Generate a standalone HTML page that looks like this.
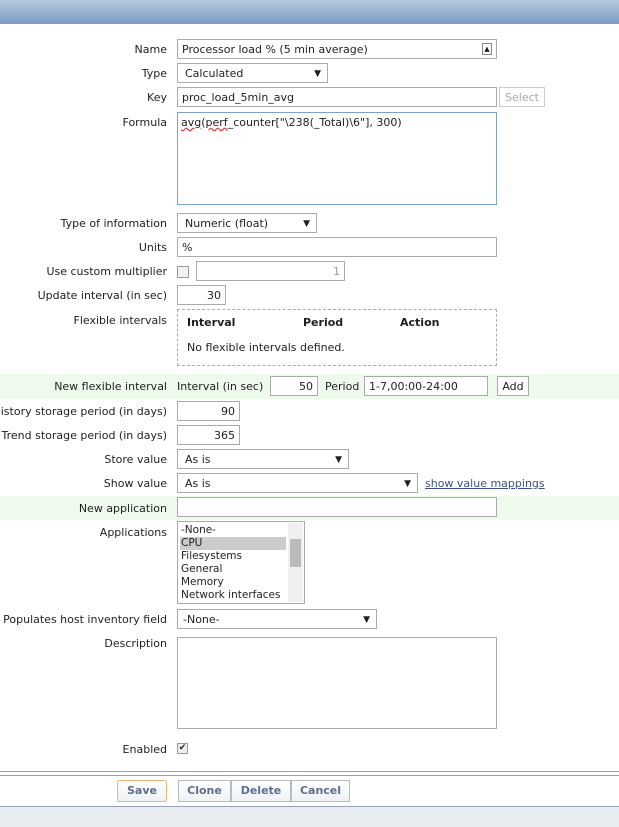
<!DOCTYPE html>
<html><head><meta charset="utf-8"><style>
*{box-sizing:border-box;margin:0;padding:0}
body{width:619px;height:827px;position:relative;background:#fff;font-family:"DejaVu Sans","Liberation Sans",sans-serif;font-size:11px;color:#1f1f1f;overflow:hidden}
.a{position:absolute}
.l{position:absolute;right:452px;white-space:nowrap}
.i{position:absolute;border:1px solid #aaa;background:#fff;padding:4px 4px 0;height:20px;line-height:12px;white-space:nowrap;overflow:hidden}
.r{text-align:right}
.s::after{content:"▼";position:absolute;right:6px;top:4px;font-size:9px}
.g{position:absolute;left:0;width:619px;background:#eefaec}
.b{position:absolute;border:1px solid #b3bccb;background:linear-gradient(#fff,#eef1f5);color:#5d6e8e;font-weight:bold;text-align:center;height:22px;line-height:20px;font-size:11px}
</style></head><body>
<div class="a" style="left:0;top:0;width:619px;height:24px;background:linear-gradient(#b5c8de,#7b9ac2)"></div>

<div class="l" style="top:43px">Name</div>
<div class="i" style="left:177px;top:39px;width:320px">Processor load % (5 min average)<span class="a" style="right:4px;top:3px;width:10px;height:12px;border:1px solid #888;font-size:7px;line-height:10px;text-align:center">▲</span></div>
<div class="l" style="top:67px">Type</div>
<div class="i s" style="left:177px;top:63px;width:151px;padding-left:7px">Calculated</div>
<div class="l" style="top:91px">Key</div>
<div class="i" style="left:177px;top:87px;width:320px">proc_load_5min_avg</div>
<div class="i" style="left:499px;top:87px;width:46px;color:#aaa;text-align:center;border-color:#ccc;padding:4px 0 0">Select</div>
<div class="l" style="top:116px">Formula</div>
<div class="i" style="left:177px;top:112px;width:320px;height:93px;border-color:#7da2ce;padding:4px 3px"><span style="text-decoration:underline wavy #d33">avg</span>(<span style="text-decoration:underline wavy #d33">perf</span>_counter["\238(_Total)\6"], 300)</div>

<div class="l" style="top:217px">Type of information</div>
<div class="i s" style="left:177px;top:213px;width:140px;padding-left:7px">Numeric (float)</div>
<div class="l" style="top:241px">Units</div>
<div class="i" style="left:177px;top:237px;width:320px">%</div>
<div class="l" style="top:265px">Use custom multiplier</div>
<div class="a" style="left:177px;top:266px;width:12px;height:12px;border:1px solid #999;background:#f3f3f3"></div>
<div class="i r" style="left:196px;top:261px;width:149px;color:#999">1</div>
<div class="l" style="top:289px">Update interval (in sec)</div>
<div class="i r" style="left:177px;top:285px;width:49px">30</div>
<div class="l" style="top:314px">Flexible intervals</div>
<div class="a" style="left:177px;top:309px;width:320px;height:57px;border:1px dashed #aaa"></div>
<div class="a" style="left:187px;top:316px;font-weight:bold;font-size:11px">Interval</div>
<div class="a" style="left:303px;top:316px;font-weight:bold;font-size:11px">Period</div>
<div class="a" style="left:400px;top:316px;font-weight:bold;font-size:11px">Action</div>
<div class="a" style="left:187px;top:341px">No flexible intervals defined.</div>

<div class="g" style="top:374px;height:25px"></div>
<div class="l" style="top:380px">New flexible interval</div>
<div class="a" style="left:177px;top:380px">Interval (in sec)</div>
<div class="i r" style="left:270px;top:376px;width:48px">50</div>
<div class="a" style="left:325px;top:380px">Period</div>
<div class="i" style="left:364px;top:376px;width:124px">1-7,00:00-24:00</div>
<div class="i" style="left:497px;top:376px;width:32px;text-align:center;padding:4px 0 0">Add</div>

<div class="l" style="top:405px">History storage period (in days)</div>
<div class="i r" style="left:177px;top:401px;width:63px">90</div>
<div class="l" style="top:429px">Trend storage period (in days)</div>
<div class="i r" style="left:177px;top:425px;width:63px">365</div>
<div class="l" style="top:453px">Store value</div>
<div class="i s" style="left:177px;top:449px;width:172px;padding-left:7px">As is</div>
<div class="l" style="top:477px">Show value</div>
<div class="i s" style="left:177px;top:473px;width:241px;padding-left:7px">As is</div>
<div class="a" style="left:425px;top:477px;color:#3b4f8b;text-decoration:underline">show value mappings</div>

<div class="g" style="top:496px;height:24px"></div>
<div class="l" style="top:502px">New application</div>
<div class="i" style="left:177px;top:497px;width:320px"></div>
<div class="l" style="top:526px">Applications</div>
<div class="a" style="left:177px;top:521px;width:128px;height:83px;border:1px solid #aaa;line-height:13px;padding:2px 0 0 3px;font-size:10.5px">
-None-<br><span style="display:block;background:#ccc;width:106px;margin-left:-1px;padding-left:1px">CPU</span>Filesystems<br>General<br>Memory<br>Network interfaces
<div class="a" style="right:1px;top:1px;width:15px;height:79px;background:#f0f0f0"></div>
<div class="a" style="right:3px;top:17px;width:11px;height:28px;background:#bbb"></div>
</div>
<div class="l" style="top:613px">Populates host inventory field</div>
<div class="i s" style="left:177px;top:609px;width:200px;padding-left:5px">-None-</div>
<div class="l" style="top:637px">Description</div>
<div class="i" style="left:177px;top:637px;width:320px;height:92px"></div>
<div class="l" style="top:743px">Enabled</div>
<div class="a" style="left:177px;top:743px;width:11px;height:11px;border:1px solid #999;background:#eee;font-size:9px;line-height:9px;text-align:center">✔</div>

<div class="a" style="left:0;top:771px;width:619px;height:5px;border-top:1px solid #8fa3bf;border-bottom:1px solid #8fa3bf"></div>
<div class="b" style="left:117px;top:780px;width:50px;border-color:#e8b87a;border-radius:2px">Save</div>
<div class="b" style="left:178px;top:780px;width:53px">Clone</div>
<div class="b" style="left:231px;top:780px;width:60px">Delete</div>
<div class="b" style="left:291px;top:780px;width:59px">Cancel</div>
<div class="a" style="left:0;top:806px;width:619px;height:21px;background:#e9ecf0;border-top:1px solid #8fa3bf"></div>
</body></html>
